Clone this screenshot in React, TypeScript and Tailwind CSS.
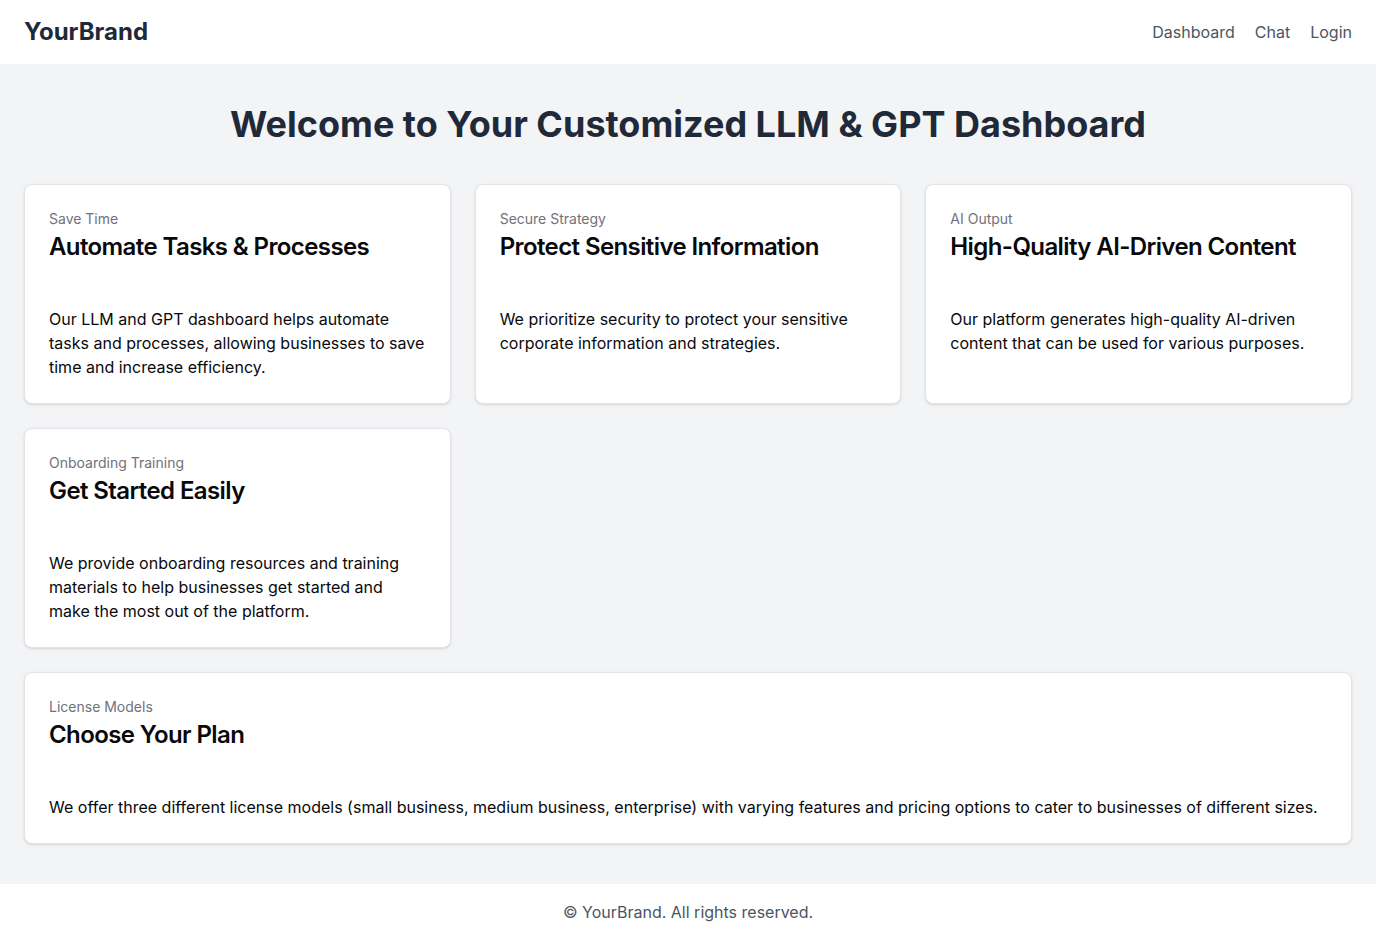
const FEATURES = [
  {
    label: "Save Time",
    title: "Automate Tasks & Processes",
    text: "Our LLM and GPT dashboard helps automate tasks and processes, allowing businesses to save time and increase efficiency.",
  },
  {
    label: "Secure Strategy",
    title: "Protect Sensitive Information",
    text: "We prioritize security to protect your sensitive corporate information and strategies.",
  },
  {
    label: "AI Output",
    title: "High-Quality AI-Driven Content",
    text: "Our platform generates high-quality AI-driven content that can be used for various purposes.",
  },
  {
    label: "Onboarding Training",
    title: "Get Started Easily",
    text: "We provide onboarding resources and training materials to help businesses get started and make the most out of the platform.",
  },
];

function Card({
  label,
  title,
  text,
  className = "",
}: {
  label: string;
  title: string;
  text: string;
  className?: string;
}) {
  return (
    <div
      className={
        "rounded-lg border border-[#e4e4e7] bg-white text-[#09090b] shadow-sm " +
        className
      }
    >
      <div className="flex flex-col gap-1.5 p-6">
        <p className="text-sm leading-5 text-[#71717a]">{label}</p>
        <h3 className="text-2xl leading-6 font-semibold tracking-tight">{title}</h3>
      </div>
      <div className="p-6">
        <p className="text-base leading-6">{text}</p>
      </div>
    </div>
  );
}

export default function App() {
  return (
    <div className="flex min-h-screen flex-col bg-[#f3f4f6] font-['Inter',sans-serif]">
      <header className="flex h-16 items-center justify-between bg-white px-6">
        <span className="text-2xl font-bold text-[#1f2937]">YourBrand</span>
        <nav className="flex items-center gap-5 text-base text-[#4b5563]">
          <a href="#">Dashboard</a>
          <a href="#">Chat</a>
          <a href="#">Login</a>
        </nav>
      </header>

      <main className="flex-1 px-6 pt-10 pb-10">
        <h1 className="mb-10 text-center text-4xl leading-10 font-bold text-[#1f2937]">
          Welcome to Your Customized LLM &amp; GPT Dashboard
        </h1>
        <div className="grid grid-cols-3 gap-6">
          {FEATURES.map((f) => (
            <Card key={f.title} {...f} />
          ))}
          <Card
            className="col-span-3"
            label="License Models"
            title="Choose Your Plan"
            text="We offer three different license models (small business, medium business, enterprise) with varying features and pricing options to cater to businesses of different sizes."
          />
        </div>
      </main>

      <footer className="bg-white py-4 text-center text-base text-[#4b5563]">
        © YourBrand. All rights reserved.
      </footer>
    </div>
  );
}
